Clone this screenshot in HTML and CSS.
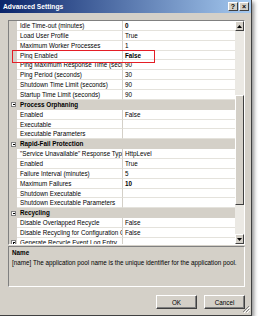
FILE: index.html
```html
<!DOCTYPE html>
<html lang="en">
<head>
    <meta charset="UTF-8">
    <title>Advanced Settings</title>
    <link rel="stylesheet" href="styles.css">
</head>
<body>
<div class="window">
    <div class="titlebar">
        <span class="title">Advanced Settings</span>
        <div class="tb-buttons">
            <span class="tb-btn">?</span>
            <span class="tb-btn">×</span>
        </div>
    </div>

    <div class="content">
        <div class="grid">
            <div class="rows">
                <div class="row"><span class="gut"></span><span class="name">Idle Time-out (minutes)</span><span class="val bold">0</span></div>
                <div class="row"><span class="gut"></span><span class="name">Load User Profile</span><span class="val">True</span></div>
                <div class="row"><span class="gut"></span><span class="name">Maximum Worker Processes</span><span class="val">1</span></div>
                <div class="row"><span class="gut"></span><span class="name">Ping Enabled</span><span class="val bold">False</span></div>
                <div class="row"><span class="gut"></span><span class="name">Ping Maximum Response Time (seconds)</span><span class="val">90</span></div>
                <div class="row"><span class="gut"></span><span class="name">Ping Period (seconds)</span><span class="val">30</span></div>
                <div class="row"><span class="gut"></span><span class="name">Shutdown Time Limit (seconds)</span><span class="val">90</span></div>
                <div class="row"><span class="gut"></span><span class="name">Startup Time Limit (seconds)</span><span class="val">90</span></div>
                <div class="row cat"><span class="gut"><i class="box minus"></i></span><span class="name">Process Orphaning</span></div>
                <div class="row"><span class="gut"></span><span class="name">Enabled</span><span class="val">False</span></div>
                <div class="row"><span class="gut"></span><span class="name">Executable</span><span class="val"></span></div>
                <div class="row"><span class="gut"></span><span class="name">Executable Parameters</span><span class="val"></span></div>
                <div class="row cat"><span class="gut"><i class="box minus"></i></span><span class="name">Rapid-Fail Protection</span></div>
                <div class="row"><span class="gut"></span><span class="name">"Service Unavailable" Response Type</span><span class="val">HttpLevel</span></div>
                <div class="row"><span class="gut"></span><span class="name">Enabled</span><span class="val">True</span></div>
                <div class="row"><span class="gut"></span><span class="name">Failure Interval (minutes)</span><span class="val">5</span></div>
                <div class="row"><span class="gut"></span><span class="name">Maximum Failures</span><span class="val bold">10</span></div>
                <div class="row"><span class="gut"></span><span class="name">Shutdown Executable</span><span class="val"></span></div>
                <div class="row"><span class="gut"></span><span class="name">Shutdown Executable Parameters</span><span class="val"></span></div>
                <div class="row cat"><span class="gut"><i class="box minus"></i></span><span class="name">Recycling</span></div>
                <div class="row"><span class="gut"></span><span class="name">Disable Overlapped Recycle</span><span class="val">False</span></div>
                <div class="row"><span class="gut"></span><span class="name">Disable Recycling for Configuration Changes</span><span class="val">False</span></div>
                <div class="row"><span class="gut"><i class="box plus"></i></span><span class="name">Generate Recycle Event Log Entry</span><span class="val"></span></div>
            </div>
            <div class="scrollbar">
                <span class="sb-btn"><svg width="5" height="3" viewBox="0 0 5 3"><path d="M0 3 L2.5 0 L5 3 Z" fill="#000"/></svg></span>
                <div class="track">
                    <div class="thumb"></div>
                </div>
                <span class="sb-btn"><svg width="5" height="3" viewBox="0 0 5 3"><path d="M0 0 L2.5 3 L5 0 Z" fill="#000"/></svg></span>
            </div>
            <div class="highlight"></div>
        </div>

        <div class="desc">
            <div class="desc-title">Name</div>
            <div class="desc-text">[name] The application pool name is the unique identifier for the application pool.</div>
        </div>

        <div class="buttons">
            <button class="btn">OK</button>
            <button class="btn">Cancel</button>
        </div>
        <svg class="grip" width="8" height="8" viewBox="0 0 8 8">
            <path d="M7 1 L1 7 M7 4 L4 7 M7 6.5 L6.5 7" stroke="#808080" stroke-width="1"/>
            <path d="M8 2 L2 8 M8 5 L5 8" stroke="#fff" stroke-width="1"/>
        </svg>
    </div>
</div>
</body>
</html>
```

FILE: styles.css
```css
body {
    margin: 0;
    background: #fff;
    font-family: "Liberation Sans", Arial, sans-serif;
    font-size: 6.3px;
    color: #000;
}

.window {
    width: 252px;
    height: 316px;
    box-sizing: border-box;
    background: #d4d0c8;
    border-right: 1px solid #404040;
    border-bottom: 1px solid #404040;
    box-shadow: 2px 2px 4px rgba(0, 0, 0, 0.45);
    display: flex;
    flex-direction: column;
}

/* barra de titulo estilo classico */
.titlebar {
    height: 13px;
    background: linear-gradient(to right, #0a246a, #a6caf0);
    display: flex;
    align-items: center;
    justify-content: space-between;
    padding: 0 0 0 3px;
}
.title { color: #fff; font-weight: bold; font-size: 6.7px; }
.tb-buttons { display: flex; gap: 1px; padding-right: 2px; }
.tb-btn {
    width: 8px;
    height: 7px;
    background: #d4d0c8;
    border: 1px solid;
    border-color: #fff #404040 #404040 #fff;
    font-size: 7px;
    font-weight: bold;
    line-height: 7px;
    text-align: center;
}

.content {
    position: relative;
    flex: 1;
    padding: 7px 6px 0 8px;
}

.grid {
    position: relative;
    display: flex;
    height: 225px;
    box-sizing: border-box;
    border: 1px solid;
    border-color: #808080 #fff #fff #808080;
    background: #fff;
}
.rows { flex: 1; overflow: hidden; }
.row {
    display: grid;
    grid-template-columns: 8px 105px 1fr;
    height: 9.86px;
    line-height: 9.86px;
}
.row > span { box-sizing: border-box; white-space: nowrap; overflow: hidden; }
.gut { background: #d4d0c8; position: relative; }
.name { padding-left: 3px; border-bottom: 1px solid #e4e2dc; }
.val { padding-left: 2px; border-left: 1px solid #d4d0c8; border-bottom: 1px solid #e4e2dc; }
.bold { font-weight: bold; }
.row.cat { background: #d4d0c8; grid-template-columns: 8px 1fr; }
.row.cat .name { font-weight: bold; border-bottom: none; }

.box {
    position: absolute;
    left: 2px;
    top: 2.5px;
    width: 5px;
    height: 5px;
    box-sizing: border-box;
    border: 1px solid #808080;
    background: #fff;
}
.box::before {
    content: "";
    position: absolute;
    left: 0.5px;
    top: 1px;
    width: 2px;
    height: 1px;
    background: #000;
}
.box.plus::after {
    content: "";
    position: absolute;
    left: 1px;
    top: 0.5px;
    width: 1px;
    height: 2px;
    background: #000;
}

.scrollbar {
    width: 9px;
    display: flex;
    flex-direction: column;
    background: #ebe9e4;
}
.sb-btn {
    height: 10px;
    box-sizing: border-box;
    background: #d4d0c8;
    border: 1px solid;
    border-color: #fff #404040 #404040 #fff;
    display: flex;
    align-items: center;
    justify-content: center;
}
.track { flex: 1; padding-top: 64px; }
.thumb {
    height: 110px;
    box-sizing: border-box;
    background: #d4d0c8;
    border: 1px solid;
    border-color: #fff #404040 #404040 #fff;
}

.highlight {
    position: absolute;
    left: 3px;
    top: 28.5px;
    width: 141px;
    height: 11px;
    border: 1px solid #e41e26;
}

.desc {
    margin-top: 1px;
    height: 41px;
    box-sizing: border-box;
    border: 1px solid;
    border-color: #808080 #fff #fff #808080;
    padding: 1px 3px;
    line-height: 10px;
}
.desc-title { font-weight: bold; }

.buttons {
    display: flex;
    justify-content: flex-end;
    gap: 7px;
    margin-top: 8px;
}
.btn {
    width: 41px;
    height: 14px;
    padding: 0;
    background: #d4d0c8;
    border: 1px solid;
    border-color: #fff #404040 #404040 #fff;
    box-shadow: inset -1px -1px 0 #808080;
    font-family: "Liberation Sans", Arial, sans-serif;
    font-size: 6.3px;
    color: #000;
}

.grip { position: absolute; right: 1px; bottom: 2px; }
```
